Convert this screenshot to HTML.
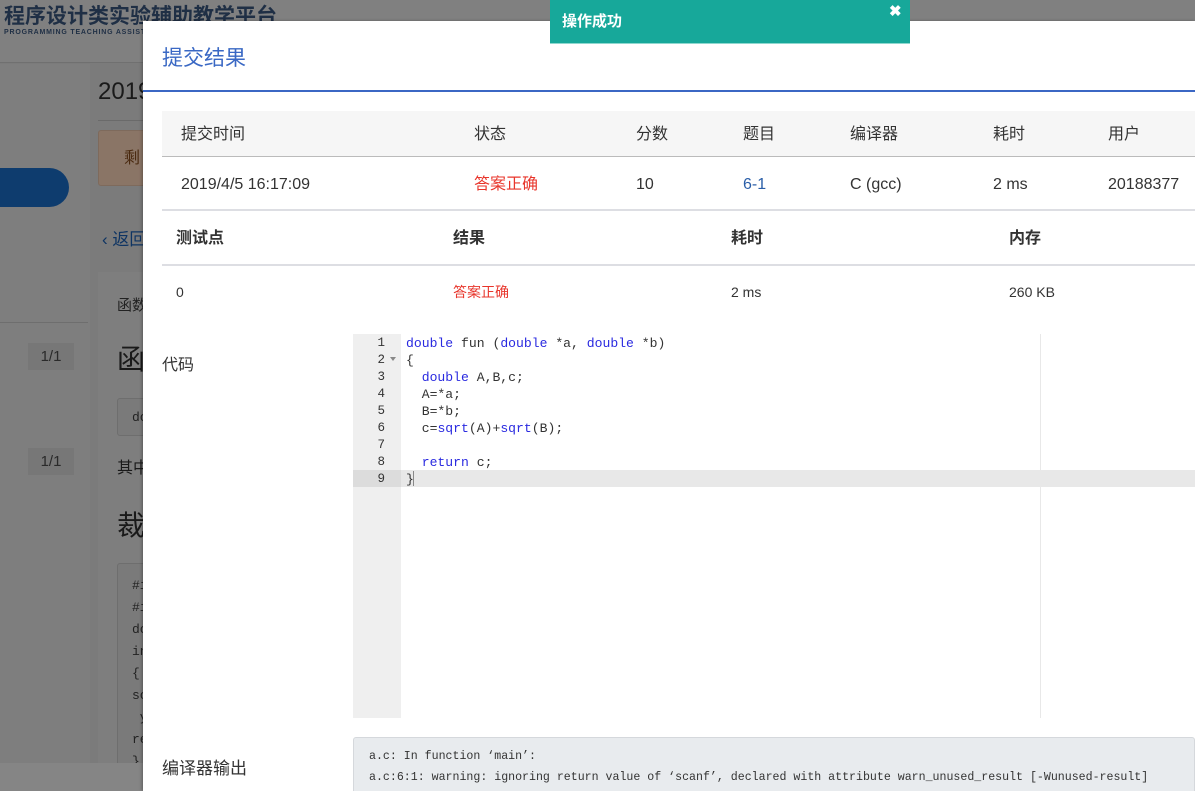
<!DOCTYPE html>
<html><head><meta charset="utf-8"><style>
*{margin:0;padding:0;box-sizing:border-box}
html,body{width:1195px;height:791px;overflow:hidden}
body{position:relative;font-family:"Liberation Sans","Noto Sans CJK SC",sans-serif;background:#7b7b7b;color:#333}
.abs{position:absolute}
.row span{position:absolute;line-height:20px}
.mono{font-family:"Liberation Mono","DejaVu Sans Mono",monospace}
</style></head><body>
<div class="abs" style="left:0;top:0;width:1195px;height:63px;background:#808080;border-bottom:1px solid #707070"></div>
<div class="abs" style="left:4px;top:4px;font-size:21px;line-height:26px;font-weight:bold;color:#1f2f45">程序设计类实验辅助教学平台</div>
<div class="abs" style="left:4px;top:29px;font-size:7px;font-weight:bold;color:#1f2f45;letter-spacing:0.8px">PROGRAMMING TEACHING ASSISTANT</div>
<div class="abs" style="left:0;top:64px;width:90px;height:727px;background:#7e7e7e"></div>
<div class="abs" style="left:0;top:168px;width:69px;height:39px;background:#0e3c6e;border-radius:0 20px 20px 0"></div>
<div class="abs" style="left:0;top:322px;width:88px;height:1px;background:#6e6e6e"></div>
<div class="abs" style="left:28px;top:343px;width:46px;height:27px;background:#777;color:#2a2a2a;font-size:15px;text-align:center;line-height:27px">1/1</div>
<div class="abs" style="left:28px;top:448px;width:46px;height:27px;background:#777;color:#2a2a2a;font-size:15px;text-align:center;line-height:27px">1/1</div>
<div class="abs" style="left:98px;top:77px;font-size:24px;line-height:30px;color:#1a1a1a">2019</div>
<div class="abs" style="left:98px;top:120px;width:50px;height:1px;background:#6a6a6a"></div>
<div class="abs" style="left:98px;top:130px;width:50px;height:56px;background:#8a7566;border:1px solid #7e6a5c;border-radius:3px"></div>
<div class="abs" style="left:124px;top:149px;font-size:16px;line-height:20px;color:#4a2a10">剩</div>
<div class="abs" style="left:102px;top:229px;font-size:17px;line-height:22px;color:#0e3463">‹ 返回</div>
<div class="abs" style="left:98px;top:272px;width:50px;height:500px;background:#7e7e7e"></div>
<div class="abs" style="left:117px;top:296px;font-size:15px;line-height:20px;color:#222">函数</div>
<div class="abs" style="left:117px;top:342px;font-size:28px;line-height:36px;color:#1a1a1a">函</div>
<div class="abs" style="left:117px;top:398px;width:40px;height:38px;border:1px solid #6e6e6e;border-radius:3px;background:#7a7a7a"></div>
<div class="abs mono" style="left:132px;top:410px;font-size:13px;color:#222">do</div>
<div class="abs" style="left:117px;top:458px;font-size:16px;line-height:22px;color:#1a1a1a">其中</div>
<div class="abs" style="left:117px;top:508px;font-size:28px;line-height:36px;color:#1a1a1a">裁</div>
<div class="abs" style="left:117px;top:563px;width:40px;height:220px;border:1px solid #6e6e6e;border-radius:3px;background:#7a7a7a"></div>
<div class="abs mono" style="left:132px;top:575px;font-size:13px;line-height:22px;color:#222">#i<br>#i<br>do<br>in<br>{<br>sc<br>&nbsp;y<br>re<br>}</div>
<div class="abs" style="left:0;top:763px;width:143px;height:28px;background:#858585"></div>

<div class="abs" style="left:143px;top:21px;width:1052px;height:770px;background:#fff;box-shadow:-1px 0 3px rgba(0,0,0,.3)"></div>
<div class="abs" style="left:162px;top:45px;font-size:21px;line-height:28px;color:#3a68c4">提交结果</div>
<div class="abs" style="left:143px;top:90px;width:1052px;height:2px;background:#3b67c4"></div>

<div class="abs" style="left:162px;top:111px;width:1033px;height:46px;background:#f6f6f6;border-bottom:1px solid #bbb"></div>
<div class="abs row" style="top:125px;left:0;width:1195px;font-size:16px;color:#333">
<span style="left:181px">提交时间</span><span style="left:474px">状态</span><span style="left:636px">分数</span><span style="left:743px">题目</span><span style="left:850px">编译器</span><span style="left:993px">耗时</span><span style="left:1108px">用户</span></div>
<div class="abs row" style="top:175px;left:0;width:1195px;font-size:16px;color:#333">
<span style="left:181px">2019/4/5 16:17:09</span><span style="left:474px;color:#e8352b">答案正确</span><span style="left:636px">10</span><span style="left:743px;color:#2a5ea8">6-1</span><span style="left:850px">C (gcc)</span><span style="left:993px">2 ms</span><span style="left:1108px">20188377</span></div>
<div class="abs" style="left:162px;top:209px;width:1033px;height:2px;background:#dddee3"></div>
<div class="abs row" style="top:229px;left:0;width:1195px;font-size:16px;font-weight:bold;color:#333">
<span style="left:176px">测试点</span><span style="left:453px">结果</span><span style="left:731px">耗时</span><span style="left:1009px">内存</span></div>
<div class="abs" style="left:162px;top:264px;width:1033px;height:2px;background:#dddee3"></div>
<div class="abs row" style="top:282px;left:0;width:1195px;font-size:14px;color:#333">
<span style="left:176px">0</span><span style="left:453px;color:#e8352b">答案正确</span><span style="left:731px">2 ms</span><span style="left:1009px">260 KB</span></div>

<div class="abs" style="left:162px;top:355px;font-size:16px;line-height:22px;color:#333">代码</div>
<div class="abs" style="left:162px;top:758px;font-size:17px;line-height:22px;color:#333">编译器输出</div>

<div class="abs" style="left:353px;top:334px;width:48px;height:384px;background:#efefef"></div>
<div class="abs" style="left:1040px;top:334px;width:1px;height:384px;background:#e8e8e8"></div>
<div class="abs" style="left:353px;top:470px;width:842px;height:17px;background:#e8e8e8"></div>
<div class="abs" style="left:353px;top:470px;width:48px;height:17px;background:#dcdcdc"></div>
<div class="abs mono" style="left:353px;top:335px;width:32px;text-align:right;font-size:12.5px;line-height:17px;color:#333">1<br>2<br>3<br>4<br>5<br>6<br>7<br>8<br>9</div>
<div class="abs" style="left:390px;top:357px;width:0;height:0;border-left:3px solid transparent;border-right:3px solid transparent;border-top:4px solid #888"></div>
<div class="abs mono" style="left:406px;top:335px;font-size:13.1px;line-height:17px;color:#333;white-space:pre"><span style="color:#2a2ae0">double</span> fun (<span style="color:#2a2ae0">double</span> *a, <span style="color:#2a2ae0">double</span> *b)
{
  <span style="color:#2a2ae0">double</span> A,B,c;
  A=*a;
  B=*b;
  c=<span style="color:#2a2ae0">sqrt</span>(A)+<span style="color:#2a2ae0">sqrt</span>(B);

  <span style="color:#2a2ae0">return</span> c;
}</div>
<div class="abs" style="left:413px;top:471px;width:1px;height:15px;background:#888"></div>

<div class="abs" style="left:353px;top:737px;width:842px;height:60px;background:#e8ebee;border:1px solid #d5d8dc;border-radius:3px;overflow:hidden">
<div class="mono" style="position:absolute;left:15px;top:8px;font-size:11.6px;line-height:21px;color:#333;white-space:pre">a.c: In function ‘main’:
a.c:6:1: warning: ignoring return value of ‘scanf’, declared with attribute warn_unused_result [-Wunused-result]
     s (“%lf%lf”,&amp;a,&amp;b);</div></div>

<div class="abs" style="left:550px;top:0;width:360px;height:44px;background:#17a89a;border-bottom:1px solid #8fd8cf"></div>
<div class="abs" style="left:562px;top:12px;font-size:15px;line-height:20px;font-weight:bold;color:#fff">操作成功</div>
<div class="abs" style="left:889px;top:3px;font-size:15px;line-height:18px;font-weight:bold;color:#fff">✖</div>
</body></html>
